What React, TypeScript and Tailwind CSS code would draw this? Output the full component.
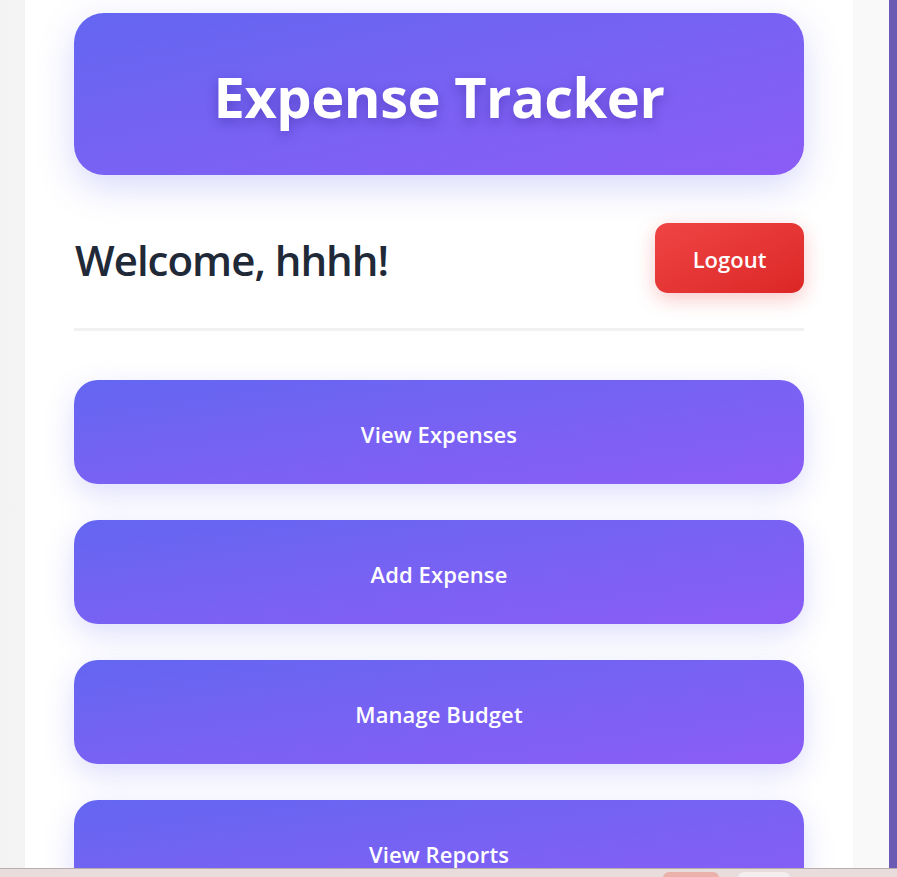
const actions = ['View Expenses', 'Add Expense', 'Manage Budget', 'View Reports']

export default function App() {
  return (
    <div className="h-[877px] w-[897px] overflow-hidden relative flex bg-gradient-to-r from-[#f3f3f3] to-[#f9f9f9] font-['Open_Sans',sans-serif]">
      <div className="w-[25px] shrink-0" />
      <main className="w-[828px] shrink-0 bg-white px-[49px] pt-[13px]">
        <header className="h-[162px] rounded-[30px] bg-gradient-to-br from-[#6366f1] to-[#8b5cf6] flex items-center justify-center shadow-[0_12px_36px_rgba(99,102,241,0.25)]">
          <h1 className="text-[56px] font-bold text-white tracking-[-0.5px] [text-shadow:0_4px_12px_rgba(40,20,120,0.35)] mt-[3px]">
            Expense Tracker
          </h1>
        </header>

        <div className="flex items-center justify-between mt-[48px] pb-[35px] border-b-[3px] border-[#f1f1f3]">
          <h2 className="text-[42px] font-semibold text-[#1f2937] tracking-[-1px] ml-[1px] mt-[2px]">Welcome, hhhh!</h2>
          <button className="w-[149px] h-[70px] pt-[3px] rounded-[13px] bg-gradient-to-br from-[#ef4444] to-[#dc2626] text-white text-[22px] font-semibold shadow-[0_6px_20px_rgba(239,68,68,0.3)]">
            Logout
          </button>
        </div>

        <div className="flex flex-col gap-[36px] mt-[49px]">
          {actions.map((label) => (
            <button
              key={label}
              className="h-[104px] pt-[4px] rounded-[24px] bg-gradient-to-br from-[#6366f1] to-[#8b5cf6] text-white text-[22px] font-semibold tracking-[0.1px] shadow-[0_10px_30px_rgba(99,102,241,0.22)]"
            >
              {label}
            </button>
          ))}
        </div>
      </main>
      <div className="w-[36px] shrink-0" />
      <div className="w-[8px] shrink-0 bg-[#6b5bb5]" />

      <div className="absolute left-0 right-0 bottom-0 h-[9px] bg-[#e8dcdc] border-t border-[#b8adad]">
        <div className="absolute left-[663px] top-[3px] w-[56px] h-[8px] rounded-t-[6px] bg-[#eab2aa]" />
        <div className="absolute left-[738px] top-[3px] w-[52px] h-[8px] rounded-t-[6px] bg-[#f4eeee]" />
      </div>
    </div>
  )
}
